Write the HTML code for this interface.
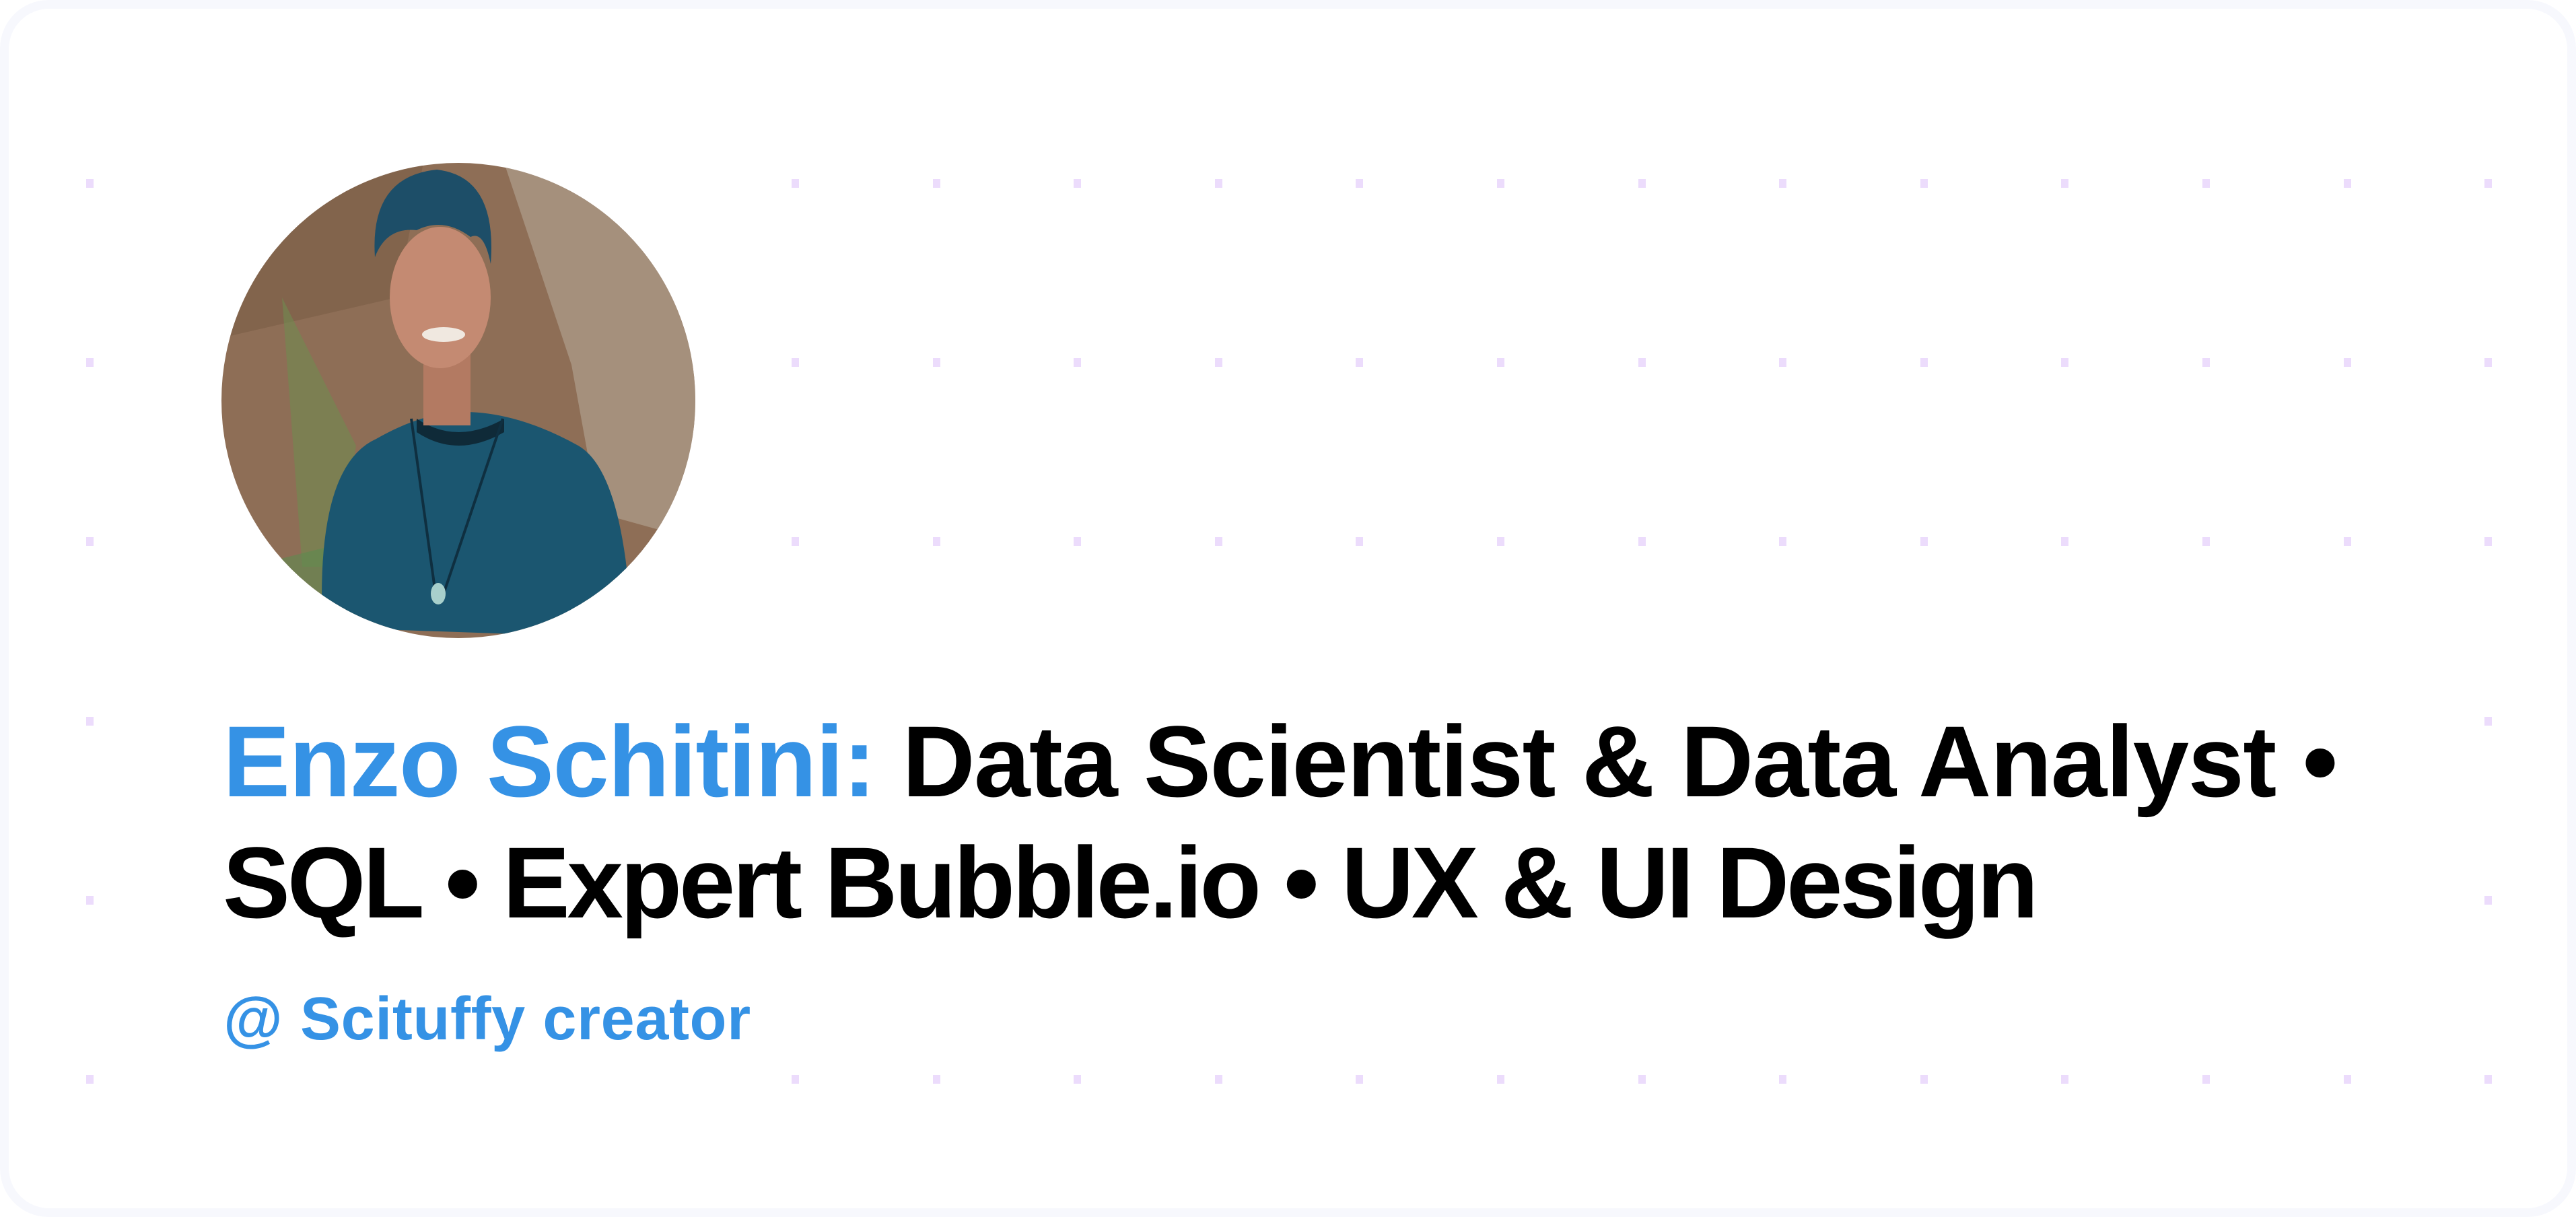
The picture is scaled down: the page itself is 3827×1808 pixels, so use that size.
<!DOCTYPE html>
<html><head><meta charset="utf-8"><style>
html,body{margin:0;padding:0;background:#fff;}
body{width:3827px;height:1808px;position:relative;overflow:hidden;font-family:"Liberation Sans",Arial,sans-serif;}
.outer{position:absolute;left:0;top:0;width:3827px;height:1808px;border-radius:72px;background:#f7f8fd;}
.card{position:absolute;left:13px;top:13px;width:3801px;height:1782px;border-radius:60px;background:#fff;overflow:hidden;}
.dot{position:absolute;width:11px;height:13px;background:#ecdcfc;}
.photo{position:absolute;left:329px;top:242px;width:704px;height:706px;background:#fff;}
.circle{position:absolute;left:0;top:0;width:704px;height:706px;border-radius:50%;overflow:hidden;}
.h{position:absolute;left:323px;top:1030px;width:3190px;height:390px;background:#fff;}
.h div{position:absolute;left:8px;font-weight:bold;font-size:150px;color:#000;white-space:nowrap;line-height:1;}
.blue{color:#3592e5;}
.f{position:absolute;left:325px;top:1455px;width:810px;height:170px;background:#fff;}
.f div{position:absolute;left:7px;top:14px;font-weight:bold;font-size:90px;color:#3592e5;white-space:nowrap;line-height:1;letter-spacing:0.6px;}
</style></head><body>
<div class="outer"></div>
<div class="card"></div>
<div id="dots"></div>
<script>
var s='';for(var r=0;r<6;r++){for(var c=0;c<18;c++){s+='<div class="dot" style="left:'+Math.round(128+c*209.6)+'px;top:'+Math.round(266+r*266.2)+'px"></div>';}}
document.getElementById('dots').innerHTML=s;
</script>
<div class="photo"><div class="circle">
<svg width="704" height="706" viewBox="0 0 704 706">
<rect width="704" height="706" fill="#8e6e56"/>
<path d="M420 0 L704 0 L704 560 L560 520 L520 300 Z" fill="#ab9886" opacity="0.8"/>
<path d="M0 0 L300 0 L260 200 L0 260 Z" fill="#7e6048" opacity="0.7"/>
<path d="M90 200 L200 420 L170 600 L120 600 Z" fill="#6f8a50" opacity="0.6"/>
<path d="M40 600 L200 560 L200 706 L40 706 Z" fill="#5d8a50" opacity="0.6"/>
<path d="M150 690 Q140 450 230 410 Q300 370 360 370 Q440 370 530 420 Q600 460 610 706 Z" fill="#1b5670"/>
<path d="M290 380 Q350 420 420 380 L420 400 Q350 440 290 400 Z" fill="#0f2a38"/>
<rect x="300" y="250" width="70" height="140" fill="#b37a62"/>
<ellipse cx="325" cy="200" rx="75" ry="105" fill="#c48a72"/>
<path d="M228 140 Q220 20 320 10 Q410 20 400 150 Q390 100 370 110 Q330 80 290 100 Q245 95 228 140 Z" fill="#1d4e68"/>
<ellipse cx="330" cy="255" rx="32" ry="11" fill="#f0e8e0"/>
<path d="M282 380 L318 640 M418 380 L330 640" stroke="#0f2f40" stroke-width="4" fill="none"/>
<ellipse cx="322" cy="640" rx="11" ry="16" fill="#a8d0cc"/>
</svg>
</div></div>
<div class="h">
<div style="top:26px;letter-spacing:-1.6px"><span class="blue">Enzo Schitini:</span> Data Scientist &amp; Data Analyst •</div>
<div style="top:206px;letter-spacing:-4.3px">SQL • Expert Bubble.io • UX &amp; UI Design</div>
</div>
<div class="f"><div>@ Scituffy creator</div></div>
</body></html>
